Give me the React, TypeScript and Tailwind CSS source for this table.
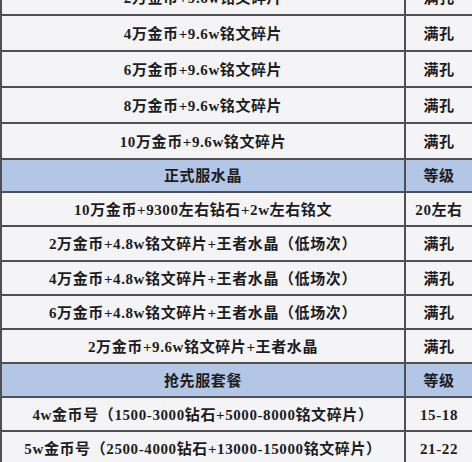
const rows: { kind: "row" | "head"; left: string; right: string; h: string }[] = [
  { kind: "row", left: "2万金币+9.6w铭文碎片", right: "满孔", h: "h-[36px]" },
  { kind: "row", left: "4万金币+9.6w铭文碎片", right: "满孔", h: "h-[36px]" },
  { kind: "row", left: "6万金币+9.6w铭文碎片", right: "满孔", h: "h-[36px]" },
  { kind: "row", left: "8万金币+9.6w铭文碎片", right: "满孔", h: "h-[36px]" },
  { kind: "row", left: "10万金币+9.6w铭文碎片", right: "满孔", h: "h-[36px]" },
  { kind: "head", left: "正式服水晶", right: "等级", h: "h-[33px]" },
  { kind: "row", left: "10万金币+9300左右钻石+2w左右铭文", right: "20左右", h: "h-[34px]" },
  { kind: "row", left: "2万金币+4.8w铭文碎片+王者水晶（低场次）", right: "满孔", h: "h-[35px]" },
  { kind: "row", left: "4万金币+4.8w铭文碎片+王者水晶（低场次）", right: "满孔", h: "h-[34px]" },
  { kind: "row", left: "6万金币+4.8w铭文碎片+王者水晶（低场次）", right: "满孔", h: "h-[34px]" },
  { kind: "row", left: "2万金币+9.6w铭文碎片+王者水晶", right: "满孔", h: "h-[34px]" },
  { kind: "head", left: "抢先服套餐", right: "等级", h: "h-[34px]" },
  { kind: "row", left: "4w金币号（1500-3000钻石+5000-8000铭文碎片）", right: "15-18", h: "h-[34px]" },
  { kind: "row", left: "5w金币号（2500-4000钻石+13000-15000铭文碎片）", right: "21-22", h: "h-[34px]" },
];

export default function App() {
  return (
    <div className="w-[472px] h-[462px] overflow-hidden bg-[#f4f4f6]">
      <div
        className="-mt-[20px] border-l-2 border-[#505052] text-[15px] font-bold tracking-[0.6px] text-[#1c1c1e]"
        style={{ fontFamily: '"Liberation Serif", "Noto Sans CJK SC", serif' }}
      >
        {rows.map((r, i) => (
          <div
            key={i}
            className={`flex box-border border-b-2 border-[#505052] ${r.h} ${
              r.kind === "head" ? "bg-[#b3c6e6]" : "bg-[#f4f4f6]"
            }`}
          >
            <div className="w-[404px] flex items-center justify-center pt-[2px] border-r-2 border-[#505052] whitespace-nowrap">
              {r.left}
            </div>
            <div className="flex-1 flex items-center justify-center pt-[2px] whitespace-nowrap">
              {r.right}
            </div>
          </div>
        ))}
      </div>
    </div>
  );
}
